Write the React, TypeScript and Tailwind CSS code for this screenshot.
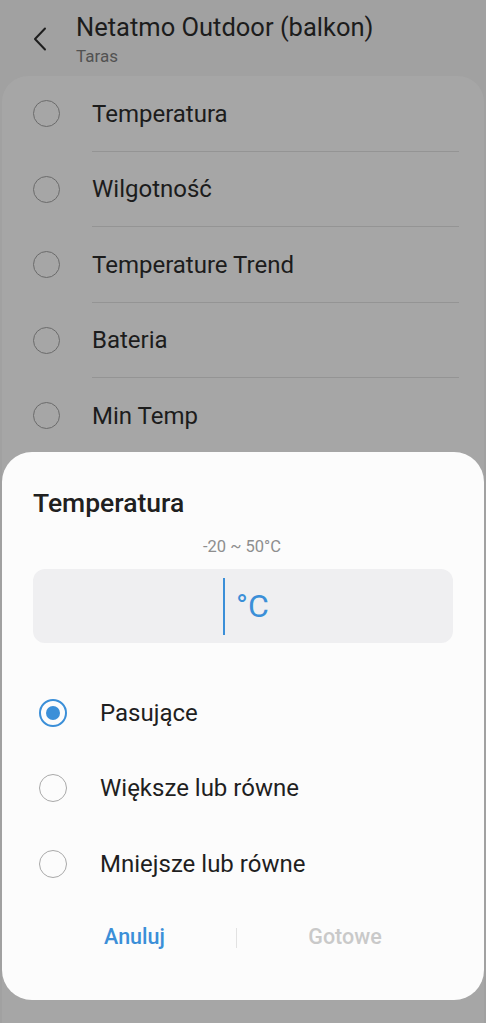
import React, { useState } from 'react';

const items = ['Temperatura', 'Wilgotność', 'Temperature Trend', 'Bateria', 'Min Temp'];
const options = ['Pasujące', 'Większe lub równe', 'Mniejsze lub równe'];

function Radio({ checked, dim }: { checked?: boolean; dim?: boolean }) {
  if (checked) {
    return (
      <span className="w-[28px] h-[28px] rounded-full border-[2px] border-[#3b8fd8] flex items-center justify-center">
        <span className="w-[14px] h-[14px] rounded-full bg-[#3b8fd8]" />
      </span>
    );
  }
  return (
    <span
      className={
        dim
          ? 'w-[27px] h-[27px] rounded-full border-[1.5px] border-[#6b6b6b]'
          : 'w-[28px] h-[28px] rounded-full border-[1.5px] border-[#a9a9a9]'
      }
    />
  );
}

export default function App() {
  const [selected, setSelected] = useState(0);

  return (
    <div className="relative w-[486px] h-[1023px] overflow-hidden bg-[#a1a1a1] font-['Roboto',sans-serif]">
      {/* header */}
      <div className="flex items-start h-[76px] pt-[12px]">
        <div className="w-[76px] flex justify-center pl-[4px] pt-[15px]">
          <svg width="14" height="24" viewBox="0 0 14 24" fill="none">
            <path d="M12 1.5 L2 12 L12 22.5" stroke="#1e1e1e" strokeWidth="2" strokeLinecap="round" strokeLinejoin="round" />
          </svg>
        </div>
        <div className="flex flex-col">
          <span className="text-[25.5px] leading-[30px] text-[#1c1c1c]">Netatmo Outdoor (balkon)</span>
          <span className="mt-[4px] text-[17px] leading-[20px] text-[#525252]">Taras</span>
        </div>
      </div>

      {/* list card */}
      <div className="mx-[2px] rounded-t-[26px] bg-[#a6a6a6] h-[950px]">
        {items.map((label, i) => (
          <div key={label} className="flex items-center h-[75.5px]">
            <div className="w-[90px] flex justify-center pr-[2px]">
              <Radio dim />
            </div>
            <div
              className={
                i < items.length - 1
                  ? 'flex-1 mr-[25px] h-full flex items-center border-b border-[#949494]'
                  : 'flex-1 mr-[25px] h-full flex items-center'
              }
            >
              <span className="text-[24px] text-[#1c1c1c] pt-[1px]">{label}</span>
            </div>
          </div>
        ))}
      </div>

      {/* dialog */}
      <div className="absolute left-[2px] right-[2px] top-[452px] h-[548px] rounded-[30px] bg-[#fcfcfc] px-[31px] pt-[35px] flex flex-col">
        <span className="text-[26.5px] leading-[32px] font-medium text-[#202020]">Temperatura</span>
        <span className="mt-[18px] text-center text-[16.5px] leading-[20px] text-[#8e8e8e] pr-[2px]">-20 ~ 50°C</span>
        <div className="mt-[12px] h-[74px] rounded-[12px] bg-[#efeff1] flex items-center justify-center pl-[6px]">
          <span className="w-[2px] h-[57px] bg-[#3b8fd8] mr-[11px]" />
          <span className="text-[32px] leading-[40px] text-[#3b8fd8]">°C</span>
        </div>
        <div className="mt-[32px] flex flex-col">
          {options.map((opt, i) => (
            <button key={opt} onClick={() => setSelected(i)} className="flex items-center h-[75.5px] text-left">
              <span className="w-[40px] flex justify-center">
                <Radio checked={selected === i} />
              </span>
              <span className="ml-[27px] text-[24px] text-[#1f1f1f]">{opt}</span>
            </button>
          ))}
        </div>
        <div className="mt-[16px] flex items-center h-[40px]">
          <button className="w-[203px] text-[21.5px] font-medium text-[#3b8fd8] text-center">Anuluj</button>
          <span className="w-px h-[20px] bg-[#e2e2e2]" />
          <button className="flex-1 text-[21.5px] font-medium text-[#c9c9c9] text-center">Gotowe</button>
        </div>
      </div>
    </div>
  );
}
